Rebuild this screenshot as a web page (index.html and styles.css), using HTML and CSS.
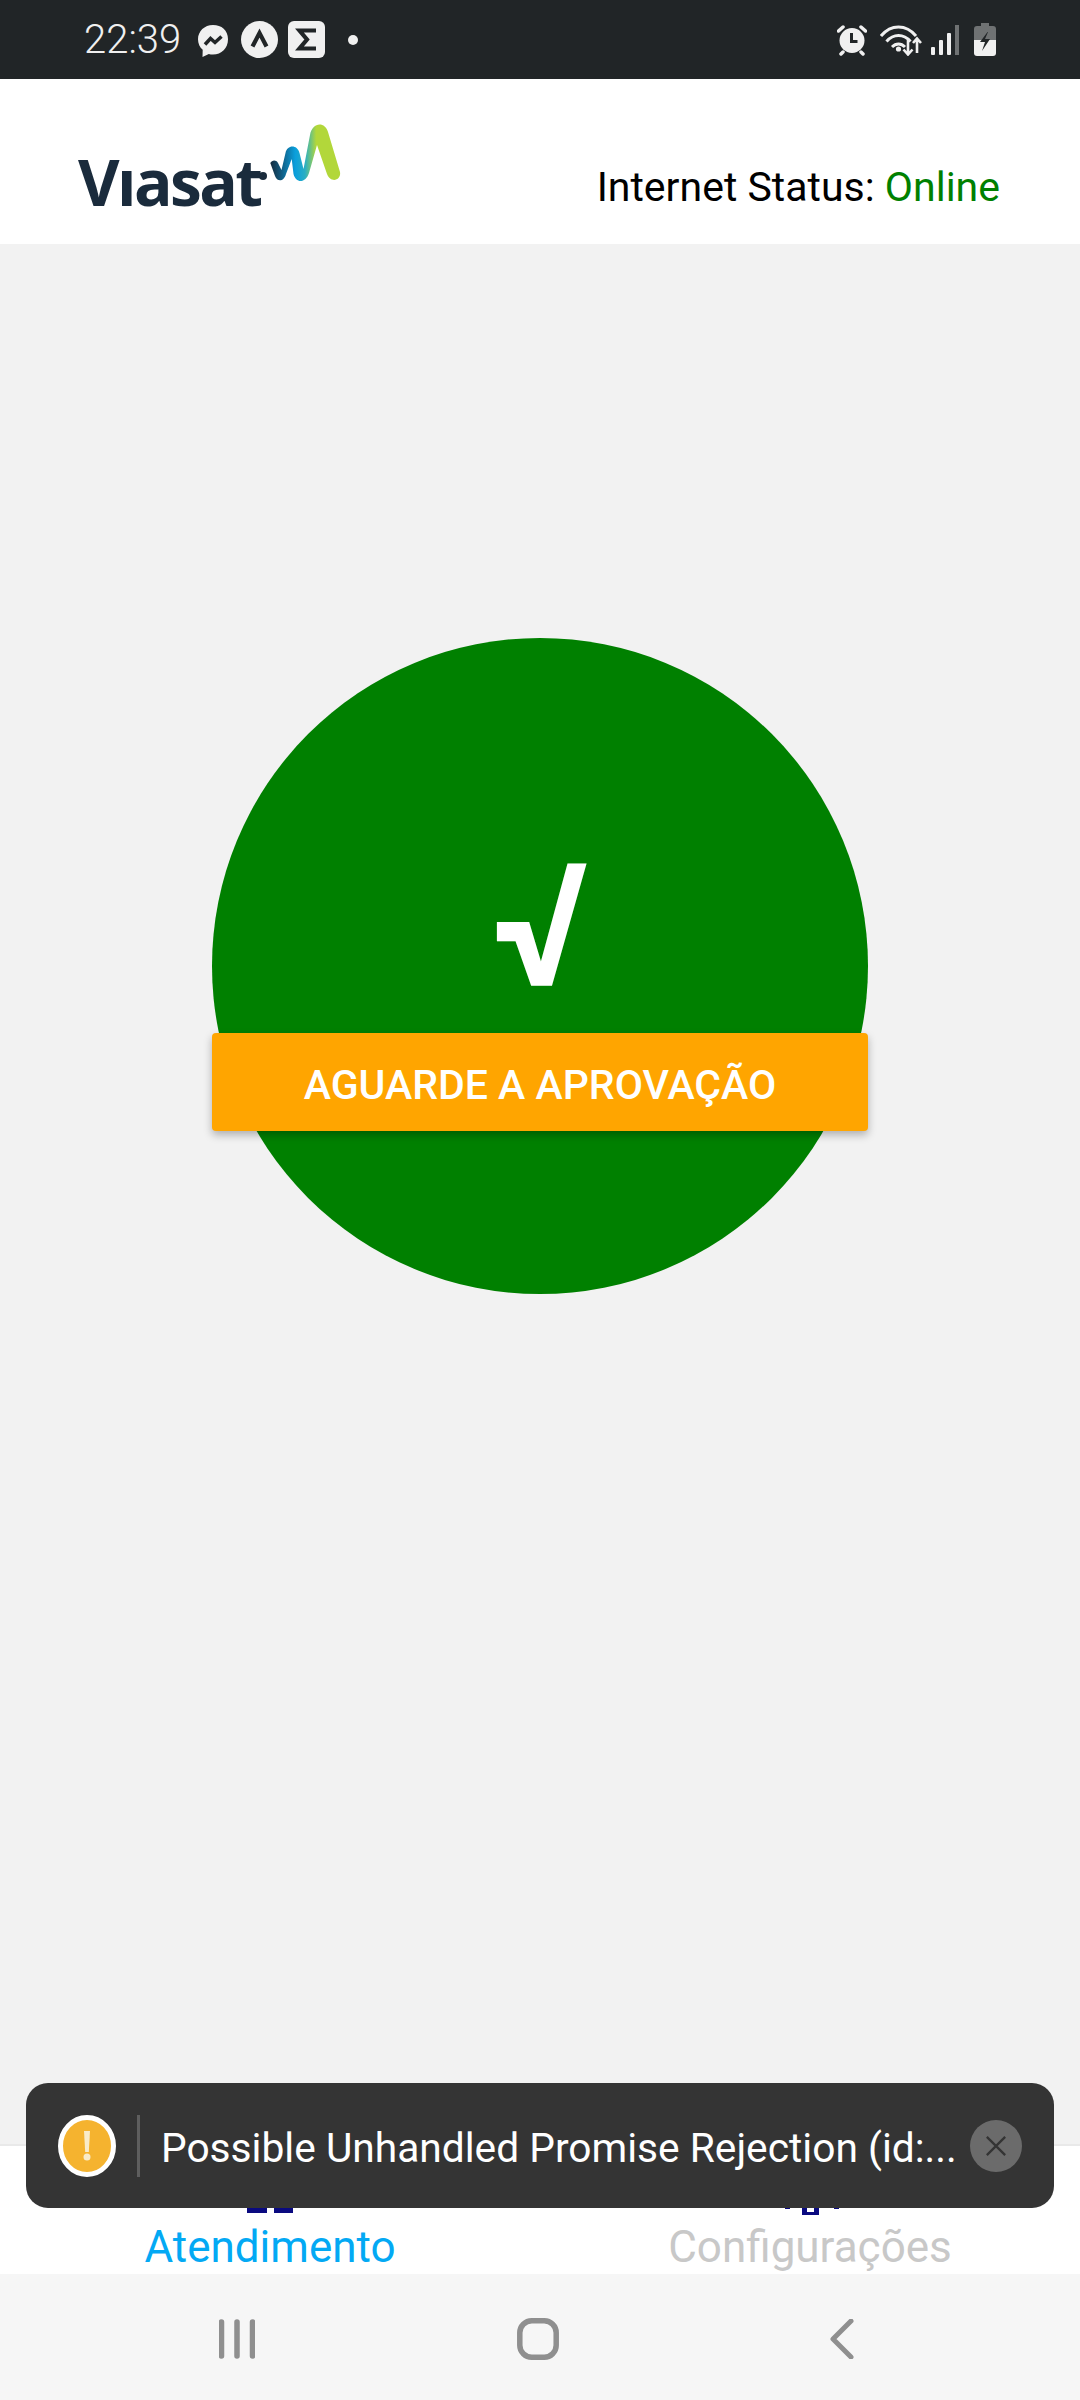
FILE: index.html
```html
<!DOCTYPE html>
<html lang="pt">
<head>
<meta charset="utf-8">
<title>Viasat</title>
<link rel="stylesheet" href="styles.css">
</head>
<body>
<div class="screen">
  <div class="statusbar">
    <div class="status-left">
      <span class="clock">22:39</span>
      <svg class="ic-msg" viewBox="0 0 32 34"><path class="w" d="M16 1C7.500 1 1 7.200 1 15.300c0 4.300 1.800 8 4.700 10.500L5.500 33l6.300-3c1.300.4 2.700.6 4.200.6 8.500 0 15-6.200 15-15.300S24.500 1 16 1z"/><path class="dk-bolt" d="M8 20.500l5.500-6 4.500 4 6.500-6"/></svg>
      <svg class="ic-round" viewBox="0 0 37 37"><circle class="w" cx="18.500" cy="18.500" r="18.500"/><path class="dk-stroke" d="M11.500 25.500l7-13.500 7 13.500"/></svg>
      <svg class="ic-sq" viewBox="0 0 37 37"><rect class="w" width="37" height="37" rx="6"/><path class="dk-stroke" d="M28 9.500H11.500l7.500 9-7.500 9H28"/></svg>
      <span class="dot"></span>
    </div>
    <div class="status-right">
      <svg class="ic-alarm" viewBox="0 0 30 32"><circle class="w" cx="15" cy="16.500" r="12.500"/><path class="w-stroke" d="M1.500 7L6 3M28.500 7L24 3M6 28l-2 2M24 28l2 2"/><path class="dk-thin" d="M14.500 9v8.500h6"/></svg>
      <svg class="ic-wifi" viewBox="0 0 42 32"><path class="w-thin" d="M1 12C11 0 26 0 36 12M6.500 17.500c7-8 17-8 24 0M12 23c4-4 9-4 13 0"/><circle class="w" cx="18.500" cy="25" r="2.600"/><path class="w-arrow" d="M28 16v14M23.500 25.500l4.500 5 4.500-5M37 29V15M33 19l4-4.500 4 4.500"/></svg>
      <svg class="ic-signal" viewBox="0 0 28 30"><rect class="w" x="0" y="22" width="4" height="8" rx="1"/><rect class="w" x="8" y="15" width="4" height="15" rx="1"/><rect class="w" x="16" y="8" width="4" height="22" rx="1"/><rect class="grey" x="24" y="0" width="4" height="30"/></svg>
      <svg class="ic-batt" viewBox="0 0 22 33"><path class="grey" d="M7 0h8v3h4a3 3 0 0 1 3 3v11H0V6a3 3 0 0 1 3-3h4z"/><path class="w" d="M0 17h22v13a3 3 0 0 1-3 3H3a3 3 0 0 1-3-3z"/><path class="dk" d="M13.500 9L6 19h5l-3 9 8-12h-5l3-7z"/></svg>
    </div>
  </div>

  <header class="appbar">
    <div class="logo">
      <span class="logo-word">Vıasat</span>
      <svg class="logo-wave" viewBox="255 120 90 70">
        <defs>
          <linearGradient id="wave" gradientUnits="userSpaceOnUse" x1="5" y1="0" x2="75" y2="0">
            <stop offset="0" stop-color="#14293b"/>
            <stop offset=".16" stop-color="#115a80"/>
            <stop offset=".36" stop-color="#0a9fdc"/>
            <stop offset=".5" stop-color="#2aaec4"/>
            <stop offset=".66" stop-color="#b2d73a"/>
            <stop offset="1" stop-color="#b2d73a"/>
          </linearGradient>
        </defs>
        <circle class="logo-dot" cx="263" cy="176" r="4"/>
        <path transform="translate(265 120)" fill="url(#wave)" d="M5.300 43C7 40 11 39.500 13 43L16.500 50 20.500 33C22 25 32 24 34.500 33L38.500 49 45 15C47 2 60 1 63 12L75 52C76.500 60 66 64 62 54L52 25 44 53C41 63 31 64 28.500 54L26.700 39 21 54C19 62 12 62 10 56Z"/>
      </svg>
    </div>
    <p class="net">Internet Status: <span class="online">Online</span></p>
  </header>

  <main class="content">
    <div class="badge">
      <span class="check">√</span>
      <div class="banner">AGUARDE A APROVAÇÃO</div>
    </div>
    <div class="toast">
      <svg class="toast-icon" viewBox="0 0 58 62"><ellipse class="t-ring" cx="29" cy="31" rx="26.500" ry="28.500"/><path class="w2" d="M26 16h6l-1.200 21h-3.600z"/><circle class="w2" cx="29" cy="42" r="3.500"/></svg>
      <span class="toast-sep"></span>
      <span class="toast-text">Possible Unhandled Promise Rejection (id:...</span>
      <span class="toast-close"><svg viewBox="0 0 24 24"><path d="M2 2l20 20M22 2L2 22"/></svg></span>
    </div>
  </main>

  <nav class="tabbar">
    <div class="tab">
      <svg class="tab-icon" viewBox="0 0 46 46"><path d="M0 0h20v20H0zM27 0h19v20H27zM0 26h20v20H0zM27 26h19v20H27z"/></svg>
      <span class="tab-label active">Atendimento</span>
    </div>
    <div class="tab">
      <svg class="tab-icon gear" viewBox="0 0 60 52"><path d="M22 30h17v22H22zM27 36v13h7V36zM5 44h5v2H5zM54 44h5v2h-5z" fill-rule="evenodd"/></svg>
      <span class="tab-label">Configurações</span>
    </div>
  </nav>

  <div class="sysnav">
    <svg class="nav-recents" viewBox="0 0 36 40"><path d="M2.500 3v34M18 3v34M33.500 3v34"/></svg>
    <svg class="nav-home" viewBox="0 0 42 42"><rect x="2.800" y="2.800" width="36.400" height="36.400" rx="12"/></svg>
    <svg class="nav-back" viewBox="0 0 24 40"><path d="M21 2L3 20l18 18"/></svg>
  </div>
</div>
</body>
</html>
```
FILE: styles.css
```css
* { box-sizing: border-box; }
html, body { margin: 0; padding: 0; }
body { font-family: Roboto, "Liberation Sans", sans-serif; background: #f2f2f2; }
.screen { width: 1080px; height: 2400px; display: flex; flex-direction: column; overflow: hidden; }

.statusbar { height: 79px; flex: none; background: #212527; display: flex; justify-content: space-between; align-items: center; padding: 0 84px 0 84px; }
.status-left, .status-right { display: flex; align-items: center; }
.clock { color: #f0f0f0; font-size: 40px; font-weight: 300; line-height: 1; margin-right: 16px; }
.w { fill: #f0f0f0; }
.w2 { fill: #f9ebc9; }
.grey { fill: #6f7273; }
.dk { fill: #212527; }
.dk-bolt { fill: none; stroke: #212527; stroke-width: 3.500; }
.dk-stroke { fill: none; stroke: #212527; stroke-width: 4.200; }
.dk-thin { fill: none; stroke: #212527; stroke-width: 3; }
.w-stroke { fill: none; stroke: #f0f0f0; stroke-width: 3.500; stroke-linecap: round; }
.w-thin { fill: none; stroke: #f0f0f0; stroke-width: 3; }
.w-arrow { fill: none; stroke: #f0f0f0; stroke-width: 2.600; }
.ic-msg { width: 32px; height: 34px; margin-right: 12px; margin-top: 2px; }
.ic-round { width: 37px; height: 37px; margin-right: 10px; }
.ic-sq { width: 37px; height: 37px; margin-right: 23px; }
.dot { width: 10px; height: 10px; border-radius: 50%; background: #f0f0f0; }
.ic-alarm { width: 30px; height: 32px; margin-right: 13px; }
.ic-wifi { width: 42px; height: 32px; margin-right: 9px; }
.ic-signal { width: 28px; height: 30px; margin-right: 15px; }
.ic-batt { width: 22px; height: 33px; }

.appbar { height: 165px; flex: none; background: #fff; display: flex; justify-content: space-between; padding: 0 80px 0 78px; position: relative; }
.logo { display: flex; position: relative; align-self: flex-end; height: 116px; width: 270px; }
.logo-word { font-family: "Open Sans", sans-serif; font-weight: 700; font-size: 64px; letter-spacing: -2.600px; line-height: 1; color: #1a2b3c; align-self: flex-end; margin-bottom: 30px; }
.logo-wave { position: absolute; left: 177px; top: -8px; width: 90px; height: 70px; }
.logo-dot { fill: #1a2b3c; }
.net { margin: 0; align-self: flex-end; font-size: 41px; line-height: 48px; color: #000; margin-bottom: 33px; }
.online { color: #008000; }

.content { flex: 1; position: relative; display: flex; justify-content: center; padding-top: 394px; border-bottom: 2px solid #e9e9e9; }
.badge { width: 656px; height: 656px; border-radius: 50%; background: #008000; display: flex; flex-direction: column; align-items: center; position: relative; }
.check { color: #fff; font-size: 172px; font-weight: 700; line-height: 1; margin-top: 203px; height: 192px; }
.banner { position: absolute; left: 0; right: 0; top: 395px; height: 98px; padding-top: 5px; background: #ffa500; border-radius: 4px; color: #fff; font-size: 41px; font-weight: 500; display: flex; align-items: center; justify-content: center; box-shadow: 0 4px 8px rgba(0,0,0,.28); }

.toast { position: absolute; left: 26px; right: 26px; top: 1839px; height: 125px; background: #343434; border-radius: 22px; display: flex; align-items: center; padding: 0 32px; z-index: 2; }
.toast-icon { width: 58px; height: 62px; flex: none; }
.t-ring { fill: #f5b32f; stroke: #fff; stroke-width: 5; }
.toast-sep { width: 3px; height: 62px; background: #5e5e5e; margin: 0 21px 0 21px; flex: none; }
.toast-text { color: #fff; font-size: 40.700px; white-space: nowrap; flex: 1; padding-top: 5px; }
.toast-close { width: 52px; height: 52px; border-radius: 50%; background: #6b6b6b; display: flex; align-items: center; justify-content: center; flex: none; }
.toast-close svg { width: 22px; height: 22px; }
.toast-close path { fill: none; stroke: #343434; stroke-width: 2.500; }

.tabbar { height: 128px; flex: none; background: #fff; display: flex; position: relative; }
.tab { flex: 1; display: flex; flex-direction: column; align-items: center; justify-content: flex-end; }
.tab-icon { width: 46px; height: 46px; fill: #0a0a80; margin-bottom: 9px; flex: none; }
.tab-icon.gear { width: 60px; height: 52px; margin-bottom: 7px; }
.tab-label { font-size: 44px; line-height: 50px; color: #c8c8c8; margin-bottom: 2px; }
.tab-label.active { color: #03a9f4; }

.sysnav { height: 126px; flex: none; background: #f6f6f6; display: flex; align-items: center; padding: 3px 226px 0 219px; justify-content: space-between; }
.sysnav svg { fill: none; stroke: #8f8f8f; stroke-linecap: round; stroke-linejoin: round; }
.nav-recents { width: 36px; height: 40px; stroke-width: 5.500; }
.nav-home { width: 42px; height: 42px; stroke-width: 5.500; margin-right: 10px; }
.nav-back { width: 24px; height: 40px; stroke-width: 5; }
```
